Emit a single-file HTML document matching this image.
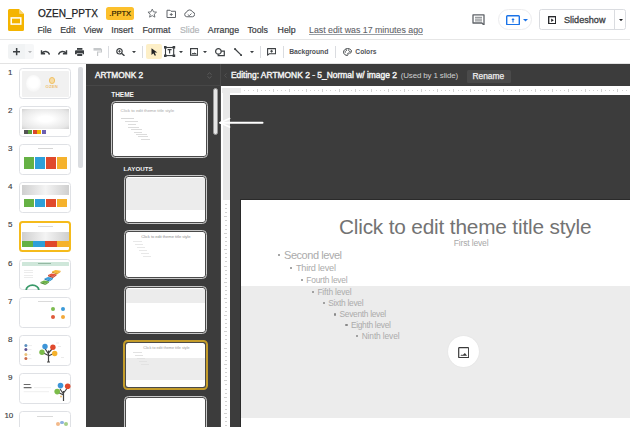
<!DOCTYPE html>
<html><head><meta charset="utf-8">
<style>
*{box-sizing:border-box;margin:0;padding:0}
html,body{width:630px;height:427px;overflow:hidden;background:#fff;font-family:"Liberation Sans",sans-serif;position:relative}
.a{position:absolute}
.t{position:absolute;white-space:nowrap;line-height:1}
.lt{border-radius:4.5px;background:#4a4a4a;border:1.7px solid #c9c9c9}
.lt.sel{border:2.3px solid #c49c2a}
.lti{position:absolute;left:1px;top:1px;right:1px;bottom:1px;background:#fff;border-radius:2.5px}
.b{color:#ababab}
.m{top:25.8px;font-size:8.8px;color:#3c4043;-webkit-text-stroke:0.2px currentColor}
.num{font-size:8px;color:#3c4043;-webkit-text-stroke:0.15px #3c4043}
.th{left:19px;width:51.8px;height:31px;border:1.3px solid #dfe1e5;border-radius:3.5px;background:#fff}
</style></head><body>

<!-- header -->
<svg class="a" style="left:8px;top:9px" width="16" height="22" viewBox="0 0 16 22">
<path d="M1.5 0H11L16 5V20.5A1.5 1.5 0 0 1 14.5 22H1.5A1.5 1.5 0 0 1 0 20.5V1.5A1.5 1.5 0 0 1 1.5 0Z" fill="#f4b400"/>
<path d="M11 0L16 5H12A1 1 0 0 1 11 4Z" fill="#f9d36a"/>
<rect x="3.2" y="8.9" width="9.6" height="6.2" fill="none" stroke="#fff" stroke-width="1.5"/>
</svg>
<div class="t" style="left:38.2px;top:7.6px;font-size:11px;color:#202124;transform:scaleX(0.915);transform-origin:0 0;-webkit-text-stroke:0.25px #202124">OZEN_PPTX</div>
<div class="a" style="left:106.3px;top:7.3px;width:27.9px;height:12.3px;background:#fcc02c;border-radius:2.5px"></div>
<div class="t" style="left:109.3px;top:10.25px;font-size:7.5px;color:#2a2000;-webkit-text-stroke:0.2px #2a2000">.PPTX</div>
<!-- star / folder / cloud -->
<svg class="a" style="left:147px;top:8px" width="10.5" height="10.5" viewBox="0 0 24 24"><path d="M12 2.5l2.9 6.3 6.9.7-5.2 4.6 1.5 6.8L12 17.4l-6.1 3.5 1.5-6.8-5.2-4.6 6.9-.7z" fill="none" stroke="#5f6368" stroke-width="2" stroke-linejoin="round"/></svg>
<svg class="a" style="left:165.5px;top:8.5px" width="10.5" height="9.5" viewBox="0 0 21 19"><path d="M2 2.5h6l2 2h9v12.5H2z" fill="none" stroke="#5f6368" stroke-width="2" stroke-linejoin="round"/><path d="M10.5 8v6M7.5 11h6" stroke="#5f6368" stroke-width="1.8"/></svg>
<svg class="a" style="left:183.5px;top:9px" width="11" height="8.5" viewBox="0 0 22 17"><path d="M5.5 15.5A4.5 4.5 0 0 1 5 6.6 6.5 6.5 0 0 1 17.3 6 4.8 4.8 0 0 1 17 15.5Z" fill="none" stroke="#5f6368" stroke-width="2" stroke-linejoin="round"/><path d="M7.5 11l3 2.5 4.5-4.5" fill="none" stroke="#5f6368" stroke-width="1.8"/></svg>

<!-- menu -->
<div class="t m" style="left:37.5px">File</div>
<div class="t m" style="left:60.2px">Edit</div>
<div class="t m" style="left:83.8px">View</div>
<div class="t m" style="left:111.2px">Insert</div>
<div class="t m" style="left:142.5px">Format</div>
<div class="t m" style="left:179.9px;color:#b4b6b9">Slide</div>
<div class="t m" style="left:207.8px">Arrange</div>
<div class="t m" style="left:247.4px">Tools</div>
<div class="t m" style="left:277.6px">Help</div>
<div class="t m" style="left:309px;color:#5f6368;-webkit-text-stroke:0.1px #5f6368;text-decoration:underline;text-decoration-color:#9aa0a6">Last edit was 17 minutes ago</div>

<!-- header right -->
<svg class="a" style="left:472.4px;top:13.9px" width="13" height="11.5" viewBox="0 0 13 11.5"><path d="M1 0.9H12V11.1L9.9 9H1Z" fill="none" stroke="#5f6368" stroke-width="1.3" stroke-linejoin="round"/><path d="M3 3.3H10M3 5.1H10M3 6.9H10" stroke="#5f6368" stroke-width="0.8"/></svg>
<div class="a" style="left:498.3px;top:8.8px;width:33.4px;height:21.6px;border:0.8px solid #ececee;border-radius:11px"></div>
<svg class="a" style="left:505.9px;top:14.5px" width="14" height="10.5" viewBox="0 0 14 10.5"><rect x="0.7" y="0.7" width="12.6" height="9.1" rx="0.8" fill="none" stroke="#1a73e8" stroke-width="1.4"/><path d="M7 7.4V4.2" stroke="#1a73e8" stroke-width="1.1"/><path d="M5.4 4.9L7 3.1L8.6 4.9Z" fill="#1a73e8"/></svg>
<svg class="a" style="left:522.8px;top:18.6px" width="5" height="3" viewBox="0 0 5 3"><path d="M0 0H5L2.5 2.6Z" fill="#1a73e8"/></svg>
<div class="a" style="left:539.2px;top:9.2px;width:87.1px;height:21.1px;border:0.9px solid #dadce0;border-radius:2.5px"></div>
<div class="a" style="left:614.2px;top:9.2px;width:0.9px;height:21.1px;background:#dadce0"></div>
<svg class="a" style="left:547.8px;top:15.9px" width="8.4" height="8.4" viewBox="0 0 8.4 8.4"><rect x="0.7" y="0.7" width="7" height="7" fill="none" stroke="#202124" stroke-width="1.3"/><path d="M3.2 2.5V5.9L5.8 4.2Z" fill="#202124"/></svg>
<div class="t" style="left:564px;top:16.3px;font-size:9.1px;color:#3c4043;-webkit-text-stroke:0.3px #3c4043">Slideshow</div>
<svg class="a" style="left:618.5px;top:18.8px" width="4" height="2.5" viewBox="0 0 4 2.5"><path d="M0 0H4L2 2.2Z" fill="#202124"/></svg>

<!-- toolbar -->
<div class="a" style="left:0;top:39.3px;width:630px;height:0.8px;background:#e6e6e6"></div>
<div class="a" style="left:0;top:62.8px;width:630px;height:1px;background:#e3e3e3"></div>
<div class="a" style="left:7.8px;top:43.9px;width:17.2px;height:15.5px;background:#f1f3f4;border-radius:2px 0 0 2px"></div>
<div class="a" style="left:25px;top:43.9px;width:8.9px;height:15.5px;background:#f6f7f8;border-radius:0 2px 2px 0"></div>
<svg class="a" style="left:12.8px;top:48.3px" width="7.3" height="7.3" viewBox="0 0 7.3 7.3"><path d="M3.65 0V7.3M0 3.65H7.3" stroke="#3c4043" stroke-width="1.5"/></svg>
<svg class="a tri" style="left:27.8px;top:50.8px;opacity:0.35" width="4" height="2.4" viewBox="0 0 4 2.4"><path d="M0 0H4L2 2.2Z" fill="#3c4043"/></svg>
<svg class="a" style="left:40px;top:48.6px" width="10" height="6" viewBox="0 0 10 6"><path d="M1.5 1.2V4.8H5.1" fill="none" stroke="#3c4043" stroke-width="1.4"/><path d="M1.8 4.5A4.2 4.2 0 0 1 9.5 5.6" fill="none" stroke="#3c4043" stroke-width="1.5"/></svg>
<svg class="a" style="left:57.8px;top:48.6px" width="10" height="6" viewBox="0 0 10 6"><path d="M8.5 1.2V4.8H4.9" fill="none" stroke="#3c4043" stroke-width="1.4"/><path d="M8.2 4.5A4.2 4.2 0 0 0 0.5 5.6" fill="none" stroke="#3c4043" stroke-width="1.5"/></svg>
<svg class="a" style="left:75px;top:47.8px" width="9.4" height="8" viewBox="0 0 9.4 8"><rect x="2" y="0" width="5.4" height="1.8" fill="#3c4043"/><path d="M1 2.3H8.4A1 1 0 0 1 9.4 3.3V6.3H7.6V5H1.8V6.3H0V3.3A1 1 0 0 1 1 2.3Z" fill="#3c4043"/><rect x="2.2" y="5.6" width="5" height="2.4" fill="#3c4043"/></svg>
<svg class="a" style="left:92.8px;top:47.8px;opacity:0.45" width="8.9" height="8.3" viewBox="0 0 8.9 8.3"><rect x="0.5" y="0" width="7.5" height="2.6" fill="#80868b"/><path d="M8 1.3H8.6V4H4.6V8.3" fill="none" stroke="#80868b" stroke-width="1.2"/></svg>
<div class="a" style="left:108.3px;top:46px;width:0.8px;height:12.3px;background:#dadce0"></div>
<svg class="a" style="left:116.1px;top:48.3px" width="9" height="8" viewBox="0 0 9 8"><circle cx="3.5" cy="3.3" r="2.7" fill="none" stroke="#3c4043" stroke-width="1.2"/><path d="M5.5 5.3L8.5 7.8" stroke="#3c4043" stroke-width="1.4"/><path d="M3.5 2V4.6M2.2 3.3H4.8" stroke="#3c4043" stroke-width="0.9"/></svg>
<svg class="a" style="left:132.2px;top:51.1px" width="4" height="2.4" viewBox="0 0 4 2.4"><path d="M0 0H4L2 2.2Z" fill="#3c4043"/></svg>
<div class="a" style="left:141.6px;top:46px;width:0.8px;height:12.3px;background:#dadce0"></div>
<div class="a" style="left:145.6px;top:43.9px;width:16.1px;height:15.5px;background:#fdefc7;border-radius:2px"></div>
<svg class="a" style="left:151px;top:48.3px" width="7" height="8" viewBox="0 0 7 8"><path d="M0.5 0.3V7L2.3 5.2L3.8 7.8L5 7.2L3.6 4.6H6.3Z" fill="#202124"/></svg>
<svg class="a" style="left:164.4px;top:46.1px" width="11.2" height="11.1" viewBox="0 0 11.2 11.1"><rect x="1.5" y="1.5" width="8.2" height="8.1" fill="none" stroke="#3c4043" stroke-width="1.1"/><rect x="0" y="0" width="2.6" height="2.6" fill="#3c4043"/><rect x="8.6" y="0" width="2.6" height="2.6" fill="#3c4043"/><rect x="0" y="8.5" width="2.6" height="2.6" fill="#3c4043"/><rect x="8.6" y="8.5" width="2.6" height="2.6" fill="#3c4043"/><path d="M3.6 3.6H7.6M5.6 3.6V7.6" stroke="#3c4043" stroke-width="1.2"/></svg>
<svg class="a" style="left:178.9px;top:51.1px" width="4" height="2.4" viewBox="0 0 4 2.4"><path d="M0 0H4L2 2.2Z" fill="#3c4043"/></svg>
<svg class="a" style="left:190px;top:47.8px" width="8.3" height="7.8" viewBox="0 0 8.3 7.8"><rect x="0.6" y="0.6" width="7.1" height="6.6" fill="none" stroke="#3c4043" stroke-width="1.2"/><path d="M2 5.6H6.3" stroke="#3c4043" stroke-width="1"/><path d="M4.6 4.6L5.6 5.6" stroke="#3c4043" stroke-width="0.8"/></svg>
<svg class="a" style="left:202.8px;top:51.1px" width="4" height="2.4" viewBox="0 0 4 2.4"><path d="M0 0H4L2 2.2Z" fill="#3c4043"/></svg>
<svg class="a" style="left:215.1px;top:48.4px" width="10" height="8.2" viewBox="0 0 10 8.2"><circle cx="3.4" cy="3.4" r="2.8" fill="none" stroke="#3c4043" stroke-width="1.2"/><path d="M6.2 3.2H9.3V7.6H3.2V6.2" fill="none" stroke="#3c4043" stroke-width="1.2"/></svg>
<svg class="a" style="left:234px;top:47.8px" width="8.2" height="8.2" viewBox="0 0 8.2 8.2"><path d="M1 1L7.2 7.2" stroke="#3c4043" stroke-width="1.2"/><circle cx="1" cy="1" r="1" fill="#3c4043"/><circle cx="7.2" cy="7.2" r="1" fill="#3c4043"/></svg>
<svg class="a" style="left:249.5px;top:51.3px" width="4" height="2.4" viewBox="0 0 4 2.4"><path d="M0 0H4L2 2.2Z" fill="#3c4043"/></svg>
<div class="a" style="left:259.5px;top:46px;width:0.8px;height:12.3px;background:#dadce0"></div>
<svg class="a" style="left:266.8px;top:48.1px" width="9.2" height="7.6" viewBox="0 0 9.2 7.6"><path d="M0.6 0.6H8.6V5.8H2.2L0.6 7.2Z" fill="none" stroke="#3c4043" stroke-width="1.1" stroke-linejoin="round"/><path d="M4.6 1.8V4.6M3.2 3.2H6" stroke="#3c4043" stroke-width="1"/></svg>
<div class="a" style="left:282.6px;top:46px;width:0.8px;height:12.3px;background:#dadce0"></div>
<div class="t" style="left:289.2px;top:49.2px;font-size:6.8px;font-weight:700;color:#505357;letter-spacing:-0.06px">Background</div>
<div class="a" style="left:335px;top:46px;width:0.8px;height:12.3px;background:#dadce0"></div>
<svg class="a" style="left:342.5px;top:48px" width="9.2" height="8" viewBox="0 0 9.2 8"><path d="M4.6 0.6C2.3 0.6 0.6 2.2 0.6 4.1C0.6 6.1 2.3 7.4 4.3 7.4C5.1 7.4 5.2 6.7 4.8 6.2C4.4 5.7 4.7 5.1 5.4 5.1H6.6C7.8 5.1 8.6 4.3 8.6 3.4C8.6 1.8 6.8 0.6 4.6 0.6Z" fill="none" stroke="#3c4043" stroke-width="1"/><circle cx="2.4" cy="3.9" r="0.65" fill="#3c4043"/><circle cx="3.4" cy="2.2" r="0.65" fill="#3c4043"/><circle cx="5.6" cy="2.1" r="0.65" fill="#3c4043"/><circle cx="6.9" cy="3.4" r="0.65" fill="#3c4043"/></svg>
<div class="t" style="left:355.3px;top:49.2px;font-size:6.7px;font-weight:700;color:#505357">Colors</div>

<!-- filmstrip -->
<div class="t num" style="left:8.0px;top:68.7px">1</div>
<div class="a th" style="top:68.0px"></div>
<div class="t num" style="left:8.0px;top:106.9px">2</div>
<div class="a th" style="top:106.2px"></div>
<div class="t num" style="left:8.0px;top:145.0px">3</div>
<div class="a th" style="top:144.3px"></div>
<div class="t num" style="left:8.0px;top:183.1px">4</div>
<div class="a th" style="top:182.4px"></div>
<div class="t num" style="left:8.0px;top:221.3px">5</div>
<div class="a th" style="top:220.6px;border:2.3px solid #f5bb1c"></div>
<div class="t num" style="left:8.0px;top:259.5px">6</div>
<div class="a th" style="top:258.8px"></div>
<div class="t num" style="left:8.0px;top:297.6px">7</div>
<div class="a th" style="top:296.9px"></div>
<div class="t num" style="left:8.0px;top:335.8px">8</div>
<div class="a th" style="top:335.1px"></div>
<div class="t num" style="left:8.0px;top:373.9px">9</div>
<div class="a th" style="top:373.2px"></div>
<div class="t num" style="left:4.4px;top:412.0px">10</div>
<div class="a th" style="top:411.3px"></div>
<!-- th1 -->
<div class="a" style="left:21.5px;top:70.5px;width:47.3px;height:26px;background:#f1f1f1;border-radius:1px"></div>
<div class="a" style="left:26.4px;top:74.5px;width:15px;height:17px;border-radius:50%;background:radial-gradient(circle at 50% 45%,#fff 40%,#f6f6f6 70%,#f1f1f1 100%)"></div>
<div class="a" style="left:48.8px;top:77px;width:6.5px;height:6.5px;border-radius:50%;border:1.3px solid #f0c064;background:#f7dca6"></div>
<div class="t" style="left:45.6px;top:85px;font-size:4.2px;font-weight:700;color:#eec070;letter-spacing:0.2px">OZEN</div>
<!-- th2 -->
<div class="a" style="left:21.5px;top:109px;width:47.3px;height:20px;background:radial-gradient(ellipse at 50% 50%,#ffffff 20%,#e6e6e6 80%,#d0d0d0 100%)"></div>
<div class="a" style="left:24px;top:130.3px;width:4px;height:4px;background:#555"></div>
<div class="a" style="left:28.4px;top:130.3px;width:4px;height:4px;background:#5aa33c"></div>
<div class="a" style="left:32.8px;top:130.3px;width:4px;height:4px;background:#d9472b"></div>
<div class="a" style="left:37.2px;top:130.3px;width:4px;height:4px;background:#f0b400"></div>
<div class="a" style="left:41.6px;top:130.3px;width:4px;height:4px;background:#6d5fb0"></div>
<!-- th3 -->
<div class="a" style="left:38px;top:148.3px;width:15px;height:1px;background:#d6d6d6"></div>
<div class="a" style="left:24px;top:156.8px;width:10px;height:12.5px;background:#65b144"></div>
<div class="a" style="left:34.9px;top:156.8px;width:10px;height:12.5px;background:#2e9fd9"></div>
<div class="a" style="left:45.8px;top:156.8px;width:10px;height:12.5px;background:#e0492c"></div>
<div class="a" style="left:56.7px;top:156.8px;width:10px;height:12.5px;background:#f5b22d"></div>
<!-- th4 -->
<div class="a" style="left:21.5px;top:185px;width:47.3px;height:10px;background:linear-gradient(90deg,#cfcfcf,#f4f4f4 50%,#cfcfcf)"></div>
<div class="a" style="left:24px;top:199px;width:10px;height:8.3px;background:#65b144"></div>
<div class="a" style="left:34.9px;top:199px;width:10px;height:8.3px;background:#2e9fd9"></div>
<div class="a" style="left:45.8px;top:199px;width:10px;height:8.3px;background:#e0492c"></div>
<div class="a" style="left:56.7px;top:199px;width:10px;height:8.3px;background:#f5b22d"></div>
<!-- th5 -->
<div class="a" style="left:38px;top:225.5px;width:15px;height:1px;background:#dadada"></div>
<div class="a" style="left:21.5px;top:231.8px;width:47.3px;height:9px;background:linear-gradient(90deg,#cfcfcf,#f4f4f4 50%,#cfcfcf)"></div>
<div class="a" style="left:21.5px;top:240.7px;width:11.8px;height:6px;background:#65b144"></div>
<div class="a" style="left:33.3px;top:240.7px;width:11.8px;height:6px;background:#2e9fd9"></div>
<div class="a" style="left:45.1px;top:240.7px;width:11.8px;height:6px;background:#e0492c"></div>
<div class="a" style="left:56.9px;top:240.7px;width:11.9px;height:6px;background:#f5b22d"></div>
<!-- th6 -->
<div class="a" style="left:21.9px;top:261.6px;width:46.8px;height:4.4px;background:#cfe7da;border-radius:0.5px"></div>
<div class="a" style="left:37.5px;top:263.2px;width:13px;height:1px;background:#94b8a3"></div>
<div class="a" style="left:24px;top:270px;width:9px;height:0.8px;background:#ececec"></div>
<div class="a" style="left:24px;top:272.4px;width:9px;height:0.8px;background:#ececec"></div>
<div class="a" style="left:24px;top:274.8px;width:9px;height:0.8px;background:#ececec"></div>
<div class="a" style="left:24px;top:277.2px;width:9px;height:0.8px;background:#ececec"></div>
<svg class="a" style="left:39px;top:268.5px" width="23" height="17" viewBox="0 0 23 17">
<path d="M1.5 13L5 11.5L10 12.3L6.5 14.8Z" fill="#6bb345"/><path d="M1.5 13L6.5 14.8V16L1.5 14.2Z" fill="#4e8f33"/><path d="M6.5 14.8L10 12.3V13.5L6.5 16Z" fill="#5aa03a"/>
<path d="M5.5 9.5L9 8L14 8.8L10.5 11.3Z" fill="#3a9fdc"/><path d="M5.5 9.5L10.5 11.3V12.5L5.5 10.7Z" fill="#2a7fb5"/><path d="M10.5 11.3L14 8.8V10L10.5 12.5Z" fill="#3090c8"/>
<path d="M9 6L12.5 4.5L17.5 5.3L14 7.8Z" fill="#e5533a"/><path d="M9 6L14 7.8V9L9 7.2Z" fill="#b83e2a"/><path d="M14 7.8L17.5 5.3V6.5L14 9Z" fill="#cc4630"/>
<path d="M13 2.5L16.5 1L21.5 1.8L18 4.3Z" fill="#f7b733"/><path d="M13 2.5L18 4.3V5.5L13 3.7Z" fill="#d39320"/><path d="M18 4.3L21.5 1.8V3L18 5.5Z" fill="#e5a52a"/>
</svg>
<svg class="a" style="left:24.5px;top:283.5px" width="15" height="6" viewBox="0 0 15 6">
<path d="M1.2 6 A6.3 4.8 0 0 1 13.8 6" fill="none" stroke="#3a9a6a" stroke-width="1.8"/>
</svg>
<!-- th7 -->
<div class="a" style="left:38px;top:301px;width:15px;height:1px;background:#dadada"></div>
<div class="a" style="left:51.4px;top:307.2px;width:4px;height:4px;border-radius:50%;background:#7dbb4f"></div>
<div class="a" style="left:61.3px;top:307.2px;width:4px;height:4px;border-radius:50%;background:#3b9ad9"></div>
<div class="a" style="left:51.4px;top:314.7px;width:4px;height:4px;border-radius:50%;background:#e05a3a"></div>
<div class="a" style="left:61.3px;top:314.7px;width:4px;height:4px;border-radius:50%;background:#f3a93a"></div>
<!-- th8 -->
<svg class="a" style="left:19px;top:335px" width="52" height="31" viewBox="0 0 52 31">
<circle cx="6.9" cy="10.6" r="1.5" fill="#5b8fbd"/><circle cx="6.9" cy="14.6" r="1.5" fill="#5f5192"/><circle cx="6.9" cy="19.6" r="1.5" fill="#eac27a"/><circle cx="6.9" cy="23.6" r="1.5" fill="#c96b4b"/>
<path d="M9.5 10.6H13M9.5 14.6H12.5M9.5 19.6H12M9.5 23.6H12.5" stroke="#e8e8e8" stroke-width="0.8"/>
<path d="M29.5 27V15.5M29.5 19L26 13.5M29.5 18L33 14M29.5 20.5L23.5 17.5M29.5 21L34.5 18.5" stroke="#444" stroke-width="1.2" fill="none"/>
<path d="M28 27H31" stroke="#444" stroke-width="1"/>
<circle cx="26" cy="11.5" r="2.7" fill="#3d95d8"/><circle cx="33.9" cy="12.3" r="2.7" fill="#e0492c"/><circle cx="23" cy="17.2" r="2.7" fill="#7cbc4a"/><circle cx="35.7" cy="18.5" r="2.7" fill="#f5b22d"/>
<path d="M37 8H40M39 11.5H42M42 22.5H45" stroke="#e6e6e6" stroke-width="0.8"/>
</svg>
<!-- th9 -->
<svg class="a" style="left:19px;top:373px" width="52" height="31" viewBox="0 0 52 31">
<path d="M4.7 11.5H11.5M4.7 14.6H12.5" stroke="#6a6a6a" stroke-width="1.2"/>
<path d="M15 14.6H32M4.7 18.7H30" stroke="#eeeeee" stroke-width="0.9"/>
<path d="M44.5 28V18M44.5 21L41 16M44.5 20L48 15.5M44.5 22L38.5 19" stroke="#444" stroke-width="1.2" fill="none"/>
<circle cx="41.5" cy="12.6" r="2.8" fill="#3d95d8"/><circle cx="48.7" cy="13.3" r="2.8" fill="#e0492c"/><circle cx="38.2" cy="18.6" r="2.8" fill="#7cbc4a"/><circle cx="42" cy="23.5" r="1" fill="#f0c070"/>
</svg>
<!-- th10 -->
<div class="a" style="left:37px;top:415.6px;width:16px;height:1px;background:#dadada"></div>
<div class="a" style="left:56px;top:422px;width:4px;height:4px;border-radius:50%;background:#f2b98a"></div>
<div class="a" style="left:60px;top:420.5px;width:3.5px;height:3.5px;border-radius:50%;background:#8fb0e0"></div>
<div class="a" style="left:64px;top:421.5px;width:4px;height:4px;border-radius:50%;background:#a6cf8a"></div>

<div class="a" style="left:78px;top:67px;width:4.5px;height:101px;background:#dadce0;border-radius:2px"></div>

<!-- dark panel -->
<div class="a" style="left:85.5px;top:64px;width:545px;height:363px;background:#3c3c3c"></div>
<div class="a" style="left:85.5px;top:85px;width:135px;height:0.8px;background:#474747"></div>
<div class="t" style="left:94.9px;top:71.0px;font-size:8.3px;color:#f4f4f4;-webkit-text-stroke:0.4px #f4f4f4">ARTMONK 2</div>
<div class="t" style="left:111.2px;top:91.9px;font-size:6.5px;font-weight:700;color:#f4f4f4">THEME</div>
<div class="t" style="left:123.6px;top:166.2px;font-size:6.2px;font-weight:700;color:#f4f4f4">LAYOUTS</div>

<div class="t" style="left:230.9px;top:71.2px;font-size:8.44px;color:#f4f4f4;-webkit-text-stroke:0.4px #f4f4f4">Editing: ARTMONK 2 - 5_Normal w/ image 2</div>
<svg class="a" style="left:224.3px;top:72.8px" width="3" height="5" viewBox="0 0 3 5"><path d="M2.6 0.3L0.5 2.5L2.6 4.7" fill="none" stroke="#5a5a5a" stroke-width="0.7"/></svg>
<div class="t" style="left:400.7px;top:71.8px;font-size:7.95px;letter-spacing:-0.13px;color:#cfcfcf">(Used by 1 slide)</div>
<div class="a" style="left:467.4px;top:70.2px;width:43.3px;height:12.4px;background:#4a4a4a;border-radius:1.5px"></div>
<div class="t" style="left:472.5px;top:72.2px;font-size:8.4px;color:#f0f0f0;-webkit-text-stroke:0.25px #f0f0f0">Rename</div>


<!-- theme panel -->
<div class="a" style="left:220px;top:64px;width:1px;height:363px;background:#4a4a4a"></div>
<svg class="a" style="left:206.5px;top:71.5px" width="5" height="7" viewBox="0 0 5 7"><path d="M0.5 2.8L2.5 0.6L4.5 2.8M0.5 4.2L2.5 6.4L4.5 4.2" fill="none" stroke="#5c5c5c" stroke-width="0.9"/></svg>
<div class="a" style="left:213.4px;top:88.2px;width:5px;height:46.6px;background:#e6e6e6;border-radius:2.5px;border:1px solid #9a9a9a"></div>
<!-- theme thumb -->
<div class="a lt" style="left:110.8px;top:101.3px;width:96.8px;height:56.5px"><div class="lti"></div></div>
<div class="t" style="left:120.6px;top:108.5px;color:#a9a9a9;font-size:4.4px;letter-spacing:-0.03px">Click to edit theme title style</div>
<div class="a" style="left:121.4px;top:117.6px;width:12.8px;height:1.6px;background:#d8d8d8"></div>
<div class="a" style="left:124.9px;top:121.1px;width:13.4px;height:1.1px;background:#dcdcdc"></div>
<div class="a" style="left:127.8px;top:124.0px;width:8.2px;height:1.1px;background:#dcdcdc"></div>
<div class="a" style="left:128.4px;top:126.8px;width:11.1px;height:1.1px;background:#dcdcdc"></div>
<div class="a" style="left:131.3px;top:129.4px;width:10.6px;height:1.1px;background:#dcdcdc"></div>
<div class="a" style="left:133.7px;top:131.6px;width:8.2px;height:1.1px;background:#dcdcdc"></div>
<div class="a" style="left:136px;top:133.8px;width:11.1px;height:1.1px;background:#dcdcdc"></div>
<div class="a" style="left:138.3px;top:136.1px;width:9.4px;height:1.1px;background:#dcdcdc"></div>
<div class="a" style="left:140.7px;top:138.5px;width:9.3px;height:1.1px;background:#dcdcdc"></div>
<!-- layouts -->
<div class="a lt" style="left:123.5px;top:175px;width:83.5px;height:48.8px"><div class="lti" style="background:linear-gradient(#fff 0,#fff 1.2px,#ececec 1.2px,#ececec 33.5px,#fff 33.5px)"></div></div>
<div class="a lt" style="left:123.5px;top:230px;width:83.5px;height:48.8px"><div class="lti"></div></div>
<div class="t" style="left:141.2px;top:234.8px;color:#8e8e8e;font-size:4.1px;letter-spacing:-0.05px">Click to edit theme title style</div>
<div class="a" style="left:133px;top:241px;width:9px;height:0.8px;background:#e8e8e8"></div>
<div class="a" style="left:135px;top:244px;width:8px;height:0.8px;background:#e8e8e8"></div>
<div class="a" style="left:137px;top:247px;width:8px;height:0.8px;background:#e8e8e8"></div>
<div class="a" style="left:139px;top:250px;width:8px;height:0.8px;background:#e8e8e8"></div>
<div class="a" style="left:141px;top:253px;width:8px;height:0.8px;background:#e8e8e8"></div>
<div class="a" style="left:143px;top:256px;width:8px;height:0.8px;background:#e8e8e8"></div>
<div class="a lt" style="left:123.5px;top:285.7px;width:83.5px;height:48.8px"><div class="lti" style="background:linear-gradient(#fff 0,#fff 1.2px,#ececec 1.2px,#ececec 15px,#fff 15px)"></div></div>
<div class="a lt sel" style="left:122.5px;top:340px;width:85.4px;height:50.4px"><div class="lti" style="background:linear-gradient(#fff 0,#fff 14.6px,#ececec 14.6px,#ececec 37.5px,#fff 37.5px)"></div></div>
<div class="t" style="left:143.2px;top:347.2px;color:#9a9a9a;font-size:3.75px">Click to edit theme title style</div>
<div class="a" style="left:133px;top:352px;width:9px;height:0.8px;background:#e2e2e2"></div>
<div class="a" style="left:135px;top:355px;width:8px;height:0.8px;background:#e2e2e2"></div>
<div class="a" style="left:137px;top:358px;width:8px;height:0.8px;background:#e2e2e2"></div>
<div class="a" style="left:139px;top:361px;width:8px;height:0.8px;background:#e2e2e2"></div>
<div class="a" style="left:141px;top:364px;width:8px;height:0.8px;background:#e2e2e2"></div>
<div class="a lt" style="left:123.5px;top:396px;width:83.5px;height:48.8px"><div class="lti"></div></div>


<!-- ruler -->
<div class="a" style="left:221.3px;top:86.1px;width:409px;height:9px;background:#fff"></div>
<div class="a" style="left:221.3px;top:86.1px;width:8.6px;height:341px;background:#fff"></div>
<div class="a" style="left:222.3px;top:87.5px;width:18.5px;height:5.5px;background:#ececec"></div>
<div class="a" style="left:222.7px;top:87.5px;width:6.9px;height:112.5px;background:#e9e9e9"></div>
<div class="a" style="left:244.3px;top:89.6px;width:0.8px;height:1.6px;background:#d2d2d2"></div>
<div class="a" style="left:248.4px;top:89.6px;width:0.8px;height:1.6px;background:#d2d2d2"></div>
<div class="a" style="left:252.5px;top:89.6px;width:0.8px;height:1.6px;background:#d2d2d2"></div>
<div class="a" style="left:256.6px;top:88.9px;width:0.8px;height:3px;background:#d2d2d2"></div>
<div class="a" style="left:260.7px;top:89.6px;width:0.8px;height:1.6px;background:#d2d2d2"></div>
<div class="a" style="left:264.8px;top:89.6px;width:0.8px;height:1.6px;background:#d2d2d2"></div>
<div class="a" style="left:268.9px;top:89.6px;width:0.8px;height:1.6px;background:#d2d2d2"></div>
<div class="a" style="left:273.0px;top:88.9px;width:0.8px;height:3px;background:#d2d2d2"></div>
<div class="a" style="left:277.1px;top:89.6px;width:0.8px;height:1.6px;background:#d2d2d2"></div>
<div class="a" style="left:281.2px;top:89.6px;width:0.8px;height:1.6px;background:#d2d2d2"></div>
<div class="a" style="left:285.3px;top:89.6px;width:0.8px;height:1.6px;background:#d2d2d2"></div>
<div class="a" style="left:289.4px;top:88.9px;width:0.8px;height:3px;background:#d2d2d2"></div>
<div class="a" style="left:293.5px;top:89.6px;width:0.8px;height:1.6px;background:#d2d2d2"></div>
<div class="a" style="left:297.6px;top:89.6px;width:0.8px;height:1.6px;background:#d2d2d2"></div>
<div class="a" style="left:301.7px;top:89.6px;width:0.8px;height:1.6px;background:#d2d2d2"></div>
<div class="a" style="left:305.8px;top:88.9px;width:0.8px;height:3px;background:#d2d2d2"></div>
<div class="a" style="left:309.9px;top:89.6px;width:0.8px;height:1.6px;background:#d2d2d2"></div>
<div class="a" style="left:314.0px;top:89.6px;width:0.8px;height:1.6px;background:#d2d2d2"></div>
<div class="a" style="left:318.1px;top:89.6px;width:0.8px;height:1.6px;background:#d2d2d2"></div>
<div class="a" style="left:322.2px;top:88.9px;width:0.8px;height:3px;background:#d2d2d2"></div>
<div class="a" style="left:326.3px;top:89.6px;width:0.8px;height:1.6px;background:#d2d2d2"></div>
<div class="a" style="left:330.4px;top:89.6px;width:0.8px;height:1.6px;background:#d2d2d2"></div>
<div class="a" style="left:334.5px;top:89.6px;width:0.8px;height:1.6px;background:#d2d2d2"></div>
<div class="a" style="left:338.6px;top:88.9px;width:0.8px;height:3px;background:#d2d2d2"></div>
<div class="a" style="left:342.7px;top:89.6px;width:0.8px;height:1.6px;background:#d2d2d2"></div>
<div class="a" style="left:346.8px;top:89.6px;width:0.8px;height:1.6px;background:#d2d2d2"></div>
<div class="a" style="left:350.9px;top:89.6px;width:0.8px;height:1.6px;background:#d2d2d2"></div>
<div class="a" style="left:355.0px;top:88.9px;width:0.8px;height:3px;background:#d2d2d2"></div>
<div class="a" style="left:359.1px;top:89.6px;width:0.8px;height:1.6px;background:#d2d2d2"></div>
<div class="a" style="left:363.2px;top:89.6px;width:0.8px;height:1.6px;background:#d2d2d2"></div>
<div class="a" style="left:367.3px;top:89.6px;width:0.8px;height:1.6px;background:#d2d2d2"></div>
<div class="a" style="left:371.4px;top:88.9px;width:0.8px;height:3px;background:#d2d2d2"></div>
<div class="a" style="left:375.5px;top:89.6px;width:0.8px;height:1.6px;background:#d2d2d2"></div>
<div class="a" style="left:379.6px;top:89.6px;width:0.8px;height:1.6px;background:#d2d2d2"></div>
<div class="a" style="left:383.7px;top:89.6px;width:0.8px;height:1.6px;background:#d2d2d2"></div>
<div class="a" style="left:387.8px;top:88.9px;width:0.8px;height:3px;background:#d2d2d2"></div>
<div class="a" style="left:391.9px;top:89.6px;width:0.8px;height:1.6px;background:#d2d2d2"></div>
<div class="a" style="left:396.0px;top:89.6px;width:0.8px;height:1.6px;background:#d2d2d2"></div>
<div class="a" style="left:400.1px;top:89.6px;width:0.8px;height:1.6px;background:#d2d2d2"></div>
<div class="a" style="left:404.2px;top:88.9px;width:0.8px;height:3px;background:#d2d2d2"></div>
<div class="a" style="left:408.3px;top:89.6px;width:0.8px;height:1.6px;background:#d2d2d2"></div>
<div class="a" style="left:412.4px;top:89.6px;width:0.8px;height:1.6px;background:#d2d2d2"></div>
<div class="a" style="left:416.5px;top:89.6px;width:0.8px;height:1.6px;background:#d2d2d2"></div>
<div class="a" style="left:420.6px;top:88.9px;width:0.8px;height:3px;background:#d2d2d2"></div>
<div class="a" style="left:424.7px;top:89.6px;width:0.8px;height:1.6px;background:#d2d2d2"></div>
<div class="a" style="left:428.8px;top:89.6px;width:0.8px;height:1.6px;background:#d2d2d2"></div>
<div class="a" style="left:432.9px;top:89.6px;width:0.8px;height:1.6px;background:#d2d2d2"></div>
<div class="a" style="left:437.0px;top:88.9px;width:0.8px;height:3px;background:#d2d2d2"></div>
<div class="a" style="left:441.1px;top:89.6px;width:0.8px;height:1.6px;background:#d2d2d2"></div>
<div class="a" style="left:445.2px;top:89.6px;width:0.8px;height:1.6px;background:#d2d2d2"></div>
<div class="a" style="left:449.3px;top:89.6px;width:0.8px;height:1.6px;background:#d2d2d2"></div>
<div class="a" style="left:453.4px;top:88.9px;width:0.8px;height:3px;background:#d2d2d2"></div>
<div class="a" style="left:457.5px;top:89.6px;width:0.8px;height:1.6px;background:#d2d2d2"></div>
<div class="a" style="left:461.6px;top:89.6px;width:0.8px;height:1.6px;background:#d2d2d2"></div>
<div class="a" style="left:465.7px;top:89.6px;width:0.8px;height:1.6px;background:#d2d2d2"></div>
<div class="a" style="left:469.8px;top:88.9px;width:0.8px;height:3px;background:#d2d2d2"></div>
<div class="a" style="left:473.9px;top:89.6px;width:0.8px;height:1.6px;background:#d2d2d2"></div>
<div class="a" style="left:478.0px;top:89.6px;width:0.8px;height:1.6px;background:#d2d2d2"></div>
<div class="a" style="left:482.1px;top:89.6px;width:0.8px;height:1.6px;background:#d2d2d2"></div>
<div class="a" style="left:486.2px;top:88.9px;width:0.8px;height:3px;background:#d2d2d2"></div>
<div class="a" style="left:490.3px;top:89.6px;width:0.8px;height:1.6px;background:#d2d2d2"></div>
<div class="a" style="left:494.4px;top:89.6px;width:0.8px;height:1.6px;background:#d2d2d2"></div>
<div class="a" style="left:498.5px;top:89.6px;width:0.8px;height:1.6px;background:#d2d2d2"></div>
<div class="a" style="left:502.6px;top:88.9px;width:0.8px;height:3px;background:#d2d2d2"></div>
<div class="a" style="left:506.7px;top:89.6px;width:0.8px;height:1.6px;background:#d2d2d2"></div>
<div class="a" style="left:510.8px;top:89.6px;width:0.8px;height:1.6px;background:#d2d2d2"></div>
<div class="a" style="left:514.9px;top:89.6px;width:0.8px;height:1.6px;background:#d2d2d2"></div>
<div class="a" style="left:519.0px;top:88.9px;width:0.8px;height:3px;background:#d2d2d2"></div>
<div class="a" style="left:523.1px;top:89.6px;width:0.8px;height:1.6px;background:#d2d2d2"></div>
<div class="a" style="left:527.2px;top:89.6px;width:0.8px;height:1.6px;background:#d2d2d2"></div>
<div class="a" style="left:531.3px;top:89.6px;width:0.8px;height:1.6px;background:#d2d2d2"></div>
<div class="a" style="left:535.4px;top:88.9px;width:0.8px;height:3px;background:#d2d2d2"></div>
<div class="a" style="left:539.5px;top:89.6px;width:0.8px;height:1.6px;background:#d2d2d2"></div>
<div class="a" style="left:543.6px;top:89.6px;width:0.8px;height:1.6px;background:#d2d2d2"></div>
<div class="a" style="left:547.7px;top:89.6px;width:0.8px;height:1.6px;background:#d2d2d2"></div>
<div class="a" style="left:551.8px;top:88.9px;width:0.8px;height:3px;background:#d2d2d2"></div>
<div class="a" style="left:555.9px;top:89.6px;width:0.8px;height:1.6px;background:#d2d2d2"></div>
<div class="a" style="left:560.0px;top:89.6px;width:0.8px;height:1.6px;background:#d2d2d2"></div>
<div class="a" style="left:564.1px;top:89.6px;width:0.8px;height:1.6px;background:#d2d2d2"></div>
<div class="a" style="left:568.2px;top:88.9px;width:0.8px;height:3px;background:#d2d2d2"></div>
<div class="a" style="left:572.3px;top:89.6px;width:0.8px;height:1.6px;background:#d2d2d2"></div>
<div class="a" style="left:576.4px;top:89.6px;width:0.8px;height:1.6px;background:#d2d2d2"></div>
<div class="a" style="left:580.5px;top:89.6px;width:0.8px;height:1.6px;background:#d2d2d2"></div>
<div class="a" style="left:584.6px;top:88.9px;width:0.8px;height:3px;background:#d2d2d2"></div>
<div class="a" style="left:588.7px;top:89.6px;width:0.8px;height:1.6px;background:#d2d2d2"></div>
<div class="a" style="left:592.8px;top:89.6px;width:0.8px;height:1.6px;background:#d2d2d2"></div>
<div class="a" style="left:596.9px;top:89.6px;width:0.8px;height:1.6px;background:#d2d2d2"></div>
<div class="a" style="left:601.0px;top:88.9px;width:0.8px;height:3px;background:#d2d2d2"></div>
<div class="a" style="left:605.1px;top:89.6px;width:0.8px;height:1.6px;background:#d2d2d2"></div>
<div class="a" style="left:609.2px;top:89.6px;width:0.8px;height:1.6px;background:#d2d2d2"></div>
<div class="a" style="left:613.3px;top:89.6px;width:0.8px;height:1.6px;background:#d2d2d2"></div>
<div class="a" style="left:617.4px;top:88.9px;width:0.8px;height:3px;background:#d2d2d2"></div>
<div class="a" style="left:621.5px;top:89.6px;width:0.8px;height:1.6px;background:#d2d2d2"></div>
<div class="a" style="left:625.6px;top:89.6px;width:0.8px;height:1.6px;background:#d2d2d2"></div>
<div class="a" style="left:629.7px;top:89.6px;width:0.8px;height:1.6px;background:#d2d2d2"></div>
<div class="a" style="left:225.0px;top:204.0px;width:1.6px;height:0.8px;background:#d2d2d2"></div>
<div class="a" style="left:225.0px;top:208.1px;width:1.6px;height:0.8px;background:#d2d2d2"></div>
<div class="a" style="left:225.0px;top:212.2px;width:1.6px;height:0.8px;background:#d2d2d2"></div>
<div class="a" style="left:224.3px;top:216.3px;width:3px;height:0.8px;background:#d2d2d2"></div>
<div class="a" style="left:225.0px;top:220.4px;width:1.6px;height:0.8px;background:#d2d2d2"></div>
<div class="a" style="left:225.0px;top:224.5px;width:1.6px;height:0.8px;background:#d2d2d2"></div>
<div class="a" style="left:225.0px;top:228.6px;width:1.6px;height:0.8px;background:#d2d2d2"></div>
<div class="a" style="left:224.3px;top:232.7px;width:3px;height:0.8px;background:#d2d2d2"></div>
<div class="a" style="left:225.0px;top:236.8px;width:1.6px;height:0.8px;background:#d2d2d2"></div>
<div class="a" style="left:225.0px;top:240.9px;width:1.6px;height:0.8px;background:#d2d2d2"></div>
<div class="a" style="left:225.0px;top:245.0px;width:1.6px;height:0.8px;background:#d2d2d2"></div>
<div class="a" style="left:224.3px;top:249.1px;width:3px;height:0.8px;background:#d2d2d2"></div>
<div class="a" style="left:225.0px;top:253.2px;width:1.6px;height:0.8px;background:#d2d2d2"></div>
<div class="a" style="left:225.0px;top:257.3px;width:1.6px;height:0.8px;background:#d2d2d2"></div>
<div class="a" style="left:225.0px;top:261.4px;width:1.6px;height:0.8px;background:#d2d2d2"></div>
<div class="a" style="left:224.3px;top:265.5px;width:3px;height:0.8px;background:#d2d2d2"></div>
<div class="a" style="left:225.0px;top:269.6px;width:1.6px;height:0.8px;background:#d2d2d2"></div>
<div class="a" style="left:225.0px;top:273.7px;width:1.6px;height:0.8px;background:#d2d2d2"></div>
<div class="a" style="left:225.0px;top:277.8px;width:1.6px;height:0.8px;background:#d2d2d2"></div>
<div class="a" style="left:224.3px;top:281.9px;width:3px;height:0.8px;background:#d2d2d2"></div>
<div class="a" style="left:225.0px;top:286.0px;width:1.6px;height:0.8px;background:#d2d2d2"></div>
<div class="a" style="left:225.0px;top:290.1px;width:1.6px;height:0.8px;background:#d2d2d2"></div>
<div class="a" style="left:225.0px;top:294.2px;width:1.6px;height:0.8px;background:#d2d2d2"></div>
<div class="a" style="left:224.3px;top:298.3px;width:3px;height:0.8px;background:#d2d2d2"></div>
<div class="a" style="left:225.0px;top:302.4px;width:1.6px;height:0.8px;background:#d2d2d2"></div>
<div class="a" style="left:225.0px;top:306.5px;width:1.6px;height:0.8px;background:#d2d2d2"></div>
<div class="a" style="left:225.0px;top:310.6px;width:1.6px;height:0.8px;background:#d2d2d2"></div>
<div class="a" style="left:224.3px;top:314.7px;width:3px;height:0.8px;background:#d2d2d2"></div>
<div class="a" style="left:225.0px;top:318.8px;width:1.6px;height:0.8px;background:#d2d2d2"></div>
<div class="a" style="left:225.0px;top:322.9px;width:1.6px;height:0.8px;background:#d2d2d2"></div>
<div class="a" style="left:225.0px;top:327.0px;width:1.6px;height:0.8px;background:#d2d2d2"></div>
<div class="a" style="left:224.3px;top:331.1px;width:3px;height:0.8px;background:#d2d2d2"></div>
<div class="a" style="left:225.0px;top:335.2px;width:1.6px;height:0.8px;background:#d2d2d2"></div>
<div class="a" style="left:225.0px;top:339.3px;width:1.6px;height:0.8px;background:#d2d2d2"></div>
<div class="a" style="left:225.0px;top:343.4px;width:1.6px;height:0.8px;background:#d2d2d2"></div>
<div class="a" style="left:224.3px;top:347.5px;width:3px;height:0.8px;background:#d2d2d2"></div>
<div class="a" style="left:225.0px;top:351.6px;width:1.6px;height:0.8px;background:#d2d2d2"></div>
<div class="a" style="left:225.0px;top:355.7px;width:1.6px;height:0.8px;background:#d2d2d2"></div>
<div class="a" style="left:225.0px;top:359.8px;width:1.6px;height:0.8px;background:#d2d2d2"></div>
<div class="a" style="left:224.3px;top:363.9px;width:3px;height:0.8px;background:#d2d2d2"></div>
<div class="a" style="left:225.0px;top:368.0px;width:1.6px;height:0.8px;background:#d2d2d2"></div>
<div class="a" style="left:225.0px;top:372.1px;width:1.6px;height:0.8px;background:#d2d2d2"></div>
<div class="a" style="left:225.0px;top:376.2px;width:1.6px;height:0.8px;background:#d2d2d2"></div>
<div class="a" style="left:224.3px;top:380.3px;width:3px;height:0.8px;background:#d2d2d2"></div>
<div class="a" style="left:225.0px;top:384.4px;width:1.6px;height:0.8px;background:#d2d2d2"></div>
<div class="a" style="left:225.0px;top:388.5px;width:1.6px;height:0.8px;background:#d2d2d2"></div>
<div class="a" style="left:225.0px;top:392.6px;width:1.6px;height:0.8px;background:#d2d2d2"></div>
<div class="a" style="left:224.3px;top:396.7px;width:3px;height:0.8px;background:#d2d2d2"></div>
<div class="a" style="left:225.0px;top:400.8px;width:1.6px;height:0.8px;background:#d2d2d2"></div>
<div class="a" style="left:225.0px;top:404.9px;width:1.6px;height:0.8px;background:#d2d2d2"></div>
<div class="a" style="left:225.0px;top:409.0px;width:1.6px;height:0.8px;background:#d2d2d2"></div>
<div class="a" style="left:224.3px;top:413.1px;width:3px;height:0.8px;background:#d2d2d2"></div>
<div class="a" style="left:225.0px;top:417.2px;width:1.6px;height:0.8px;background:#d2d2d2"></div>
<div class="a" style="left:225.0px;top:421.3px;width:1.6px;height:0.8px;background:#d2d2d2"></div>
<div class="a" style="left:225.0px;top:425.4px;width:1.6px;height:0.8px;background:#d2d2d2"></div>
<!-- arrow -->
<svg class="a" style="left:217px;top:116px" width="48" height="14" viewBox="0 0 48 14">
<path d="M3.5 6.8H45.5" stroke="#fff" stroke-width="2" stroke-linecap="round"/>
<path d="M12.5 2.5L3 6.8L12.5 11" fill="none" stroke="#fff" stroke-width="1.8" stroke-linecap="round" stroke-linejoin="round"/>
</svg>

<!-- slide -->
<div class="a" style="left:240.2px;top:199px;width:400px;height:228px;background:#2a2a2a"></div>
<div class="a" style="left:241px;top:200px;width:400px;height:227px;background:#fff"></div>
<div class="a" style="left:241px;top:286.3px;width:400px;height:131.3px;background:#ececec"></div>
<div class="t" style="left:338.9px;top:217.4px;font-size:20.8px;letter-spacing:-0.17px;color:#737373">Click to edit theme title style</div>
<div class="t" style="left:453.7px;top:239.0px;font-size:8.5px;letter-spacing:-0.15px;color:#a8a8a8">First level</div>
<div class="t b" style="left:284px;top:249.69px;font-size:11.0px;letter-spacing:-0.45px">Second level</div>
<div class="a" style="left:277.50px;top:253.60px;width:2.8px;height:2.8px;border-radius:50%;background:#888"></div>
<div class="t b" style="left:296px;top:263.71px;font-size:9.2px;letter-spacing:-0.24px">Third level</div>
<div class="a" style="left:289.65px;top:267.35px;width:2.1px;height:2.1px;border-radius:50%;background:#888"></div>
<div class="t b" style="left:306.3px;top:276.19px;font-size:8.4px;letter-spacing:-0.22px">Fourth level</div>
<div class="a" style="left:300.95px;top:279.35px;width:2.1px;height:2.1px;border-radius:50%;background:#888"></div>
<div class="t b" style="left:317.4px;top:287.59px;font-size:8.4px;letter-spacing:-0.16px">Fifth level</div>
<div class="a" style="left:311.95px;top:290.75px;width:2.1px;height:2.1px;border-radius:50%;background:#888"></div>
<div class="t b" style="left:328.2px;top:298.59px;font-size:8.4px;letter-spacing:-0.28px">Sixth level</div>
<div class="a" style="left:323.15px;top:301.75px;width:2.1px;height:2.1px;border-radius:50%;background:#888"></div>
<div class="t b" style="left:339.5px;top:310.29px;font-size:8.4px;letter-spacing:-0.3px">Seventh level</div>
<div class="a" style="left:334.15px;top:313.45px;width:2.1px;height:2.1px;border-radius:50%;background:#888"></div>
<div class="t b" style="left:350.9px;top:321.09px;font-size:8.4px;letter-spacing:-0.3px">Eighth level</div>
<div class="a" style="left:345.45px;top:324.25px;width:2.1px;height:2.1px;border-radius:50%;background:#888"></div>
<div class="t b" style="left:361.7px;top:332.09px;font-size:8.4px;letter-spacing:-0.12px">Ninth level</div>
<div class="a" style="left:356.35px;top:335.25px;width:2.1px;height:2.1px;border-radius:50%;background:#888"></div>
<div class="a" style="left:448.3px;top:336.3px;width:30.8px;height:30.8px;border-radius:50%;background:#fff;box-shadow:0 0 1.5px rgba(0,0,0,0.08)"></div>
<svg class="a" style="left:457.6px;top:346.7px" width="11.4" height="11.4" viewBox="0 0 11.4 11.4">
<rect x="0.7" y="0.7" width="10" height="10" rx="0.6" fill="none" stroke="#3a3a3a" stroke-width="1.2"/>
<path d="M2.3 8.8L3.8 7.4L4.8 8.1L6.9 6L9.1 8.8Z" fill="#3a3a3a"/>
</svg>
</body></html>
